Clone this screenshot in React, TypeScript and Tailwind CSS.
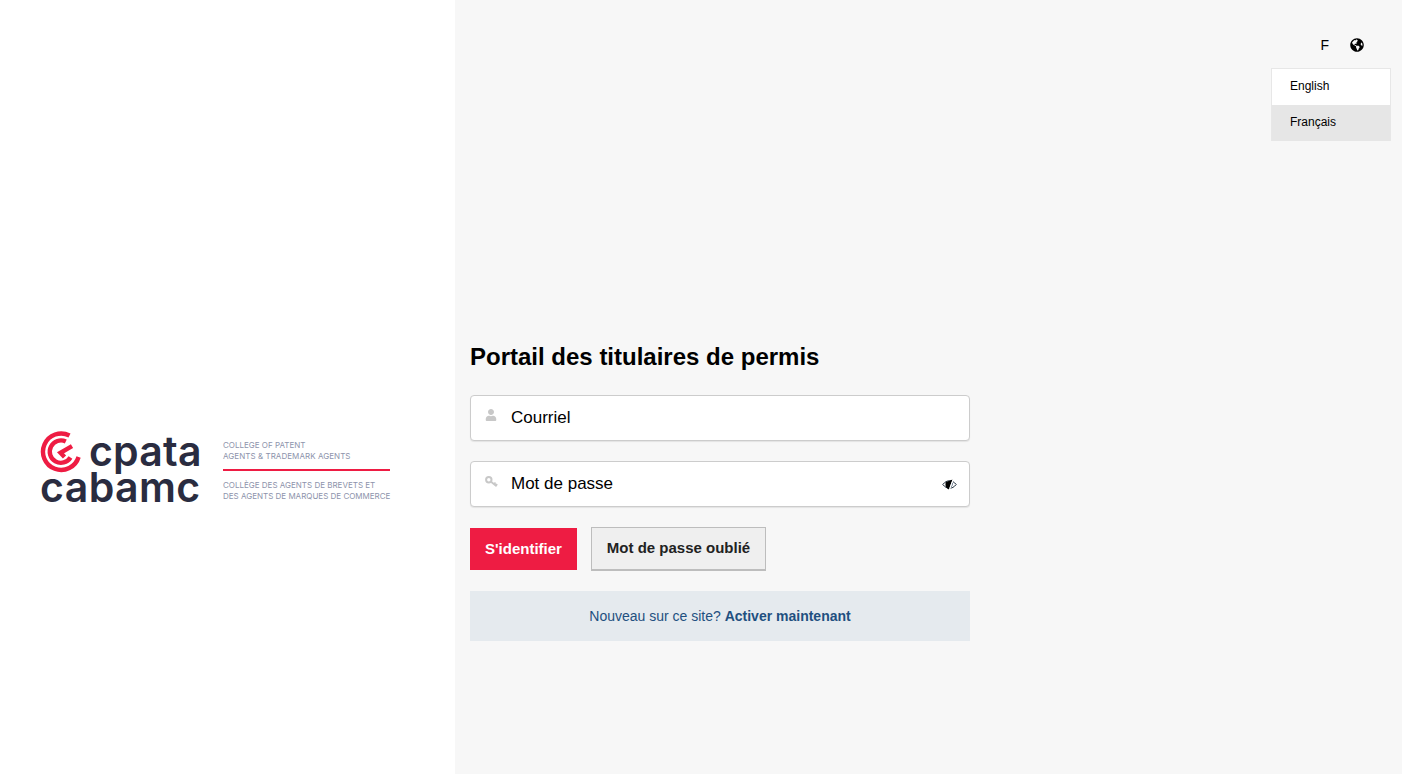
import { FaUser, FaGlobeAmericas } from 'react-icons/fa';

function Logo() {
  return (
    <div className="flex items-start">
      <div className="w-[183px]">
        <div className="flex items-start h-[39px]">
          <svg className="shrink-0" width="44" height="44" viewBox="0 0 44 44" fill="none" stroke="#ee1c43" strokeWidth="4.4">
            <path d="M29.5 4.5A18.2 18.2 0 1 0 38.6 26" />
            <path d="M25.8 10.5A11.2 11.2 0 1 0 30.5 26.5" />
            <path d="M32 15.2L20.5 21.8L24.5 26" />
          </svg>
          <div className="ml-[5px] mt-[2px] text-[41px] leading-[36px] font-semibold text-[#2a2c40] tracking-[0.2px] font-['Inter',sans-serif]">cpata</div>
        </div>
        <div className="text-[41px] leading-[34px] font-semibold text-[#2a2c40] tracking-[0.4px] font-['Inter',sans-serif]">cabamc</div>
      </div>
      <div className="w-[167px] text-[8px] leading-[11px] text-[#8d93ab] font-['Inter',sans-serif] pt-[9px] whitespace-nowrap">
        <div>COLLEGE OF PATENT</div>
        <div className="tracking-[0.05px]">AGENTS &amp; TRADEMARK AGENTS</div>
        <div className="h-[2px] bg-[#ee1c43] mt-[7px] mb-[9px]" />
        <div>COLLÈGE DES AGENTS DE BREVETS ET</div>
        <div>DES AGENTS DE MARQUES DE COMMERCE</div>
      </div>
    </div>
  );
}

function KeyIcon() {
  return (
    <svg className="mb-[5px] shrink-0" width="13" height="12" viewBox="0 0 13 12" fill="none" stroke="#c8c8c8">
      <circle cx="3.8" cy="3.8" r="2.7" strokeWidth="2" />
      <path d="M6 5.8L11.6 10.2M9 8L10.6 6.6M10.8 9.6L12.2 8.2" strokeWidth="1.8" />
    </svg>
  );
}

function EyeIcon() {
  return (
    <svg className="ml-auto" width="15" height="11" viewBox="0 0 15 11" fill="none">
      <path d="M.8 5.5C3 2.8 5 1.8 7.5 1.8S12 2.8 14.2 5.5C12 8.2 10 9.2 7.5 9.2S3 8.2 .8 5.5Z" stroke="#1b2a3a" strokeWidth="1" />
      <path d="M3.6 3.4C5.5 2 8 1.6 10.6 .4L6.8 10.4C4 9 3 7 3.6 3.4Z" fill="#000000" />
      <path d="M11.2 .4L7.6 10.4" stroke="#ffffff" strokeWidth="1.2" />
      <path d="M10.4 3.8C10.8 5.4 10.2 7 9 8" stroke="#7f8fa0" strokeWidth="1" />
    </svg>
  );
}

export default function App() {
  return (
    <div className="flex h-[774px] overflow-hidden font-['Liberation_Sans',Arial,sans-serif] text-black">
      <div className="w-[455px] bg-white pl-[40px] pt-[431px]">
        <Logo />
      </div>
      <div className="flex-1 bg-[#f7f7f7] relative pl-[15px] pt-[342px]">
        <div className="absolute right-[38px] top-[36px] flex items-center gap-[21px] h-[17px]">
          <span className="text-sm">F</span>
          <FaGlobeAmericas className="text-[14px]" />
        </div>
        <div className="absolute left-[816px] top-[68px] w-[120px] border border-[#e7e7e7] border-b-0 text-xs">
          <div className="h-[36px] bg-white pl-[18px] pb-[2px] flex items-center">English</div>
          <div className="h-[36px] bg-[#e6e6e6] pl-[18px] pb-[2px] flex items-center">Français</div>
        </div>

        <div className="w-[500px]">
          <h1 className="text-2xl font-bold leading-[29px]">Portail des titulaires de permis</h1>
          <div className="mt-[24px] h-[46px] bg-white border border-[#cccccc] rounded-[4px] flex items-center pl-[14px] shadow-[0_1px_1px_rgba(0,0,0,0.08)]">
            <FaUser className="text-[12px] text-[#c8c8c8] w-[12px] mb-[6px]" />
            <span className="ml-[14px] text-[17px]">Courriel</span>
          </div>
          <div className="mt-[20px] h-[46px] bg-white border border-[#cccccc] rounded-[4px] flex items-center pl-[14px] pr-[12px] shadow-[0_1px_1px_rgba(0,0,0,0.08)]">
            <KeyIcon />
            <span className="ml-[13px] text-[17px]">Mot de passe</span>
            <EyeIcon />
          </div>
          <div className="mt-[20px] flex items-center gap-[14px]">
            <button className="w-[107px] h-[42px] bg-[#ee1c43] text-white text-[15px] font-bold">S'identifier</button>
            <button className="w-[175px] h-[44px] bg-[#efefef] border border-[#bdbdbd] border-b-2 text-[#222222] text-[15px] font-bold">Mot de passe oublié</button>
          </div>
          <div className="mt-[20px] h-[50px] bg-[#e5eaee] flex items-center justify-center text-sm text-[#1f5080]">
            <span>Nouveau sur ce site? <a className="font-bold">Activer maintenant</a></span>
          </div>
        </div>
      </div>
    </div>
  );
}
